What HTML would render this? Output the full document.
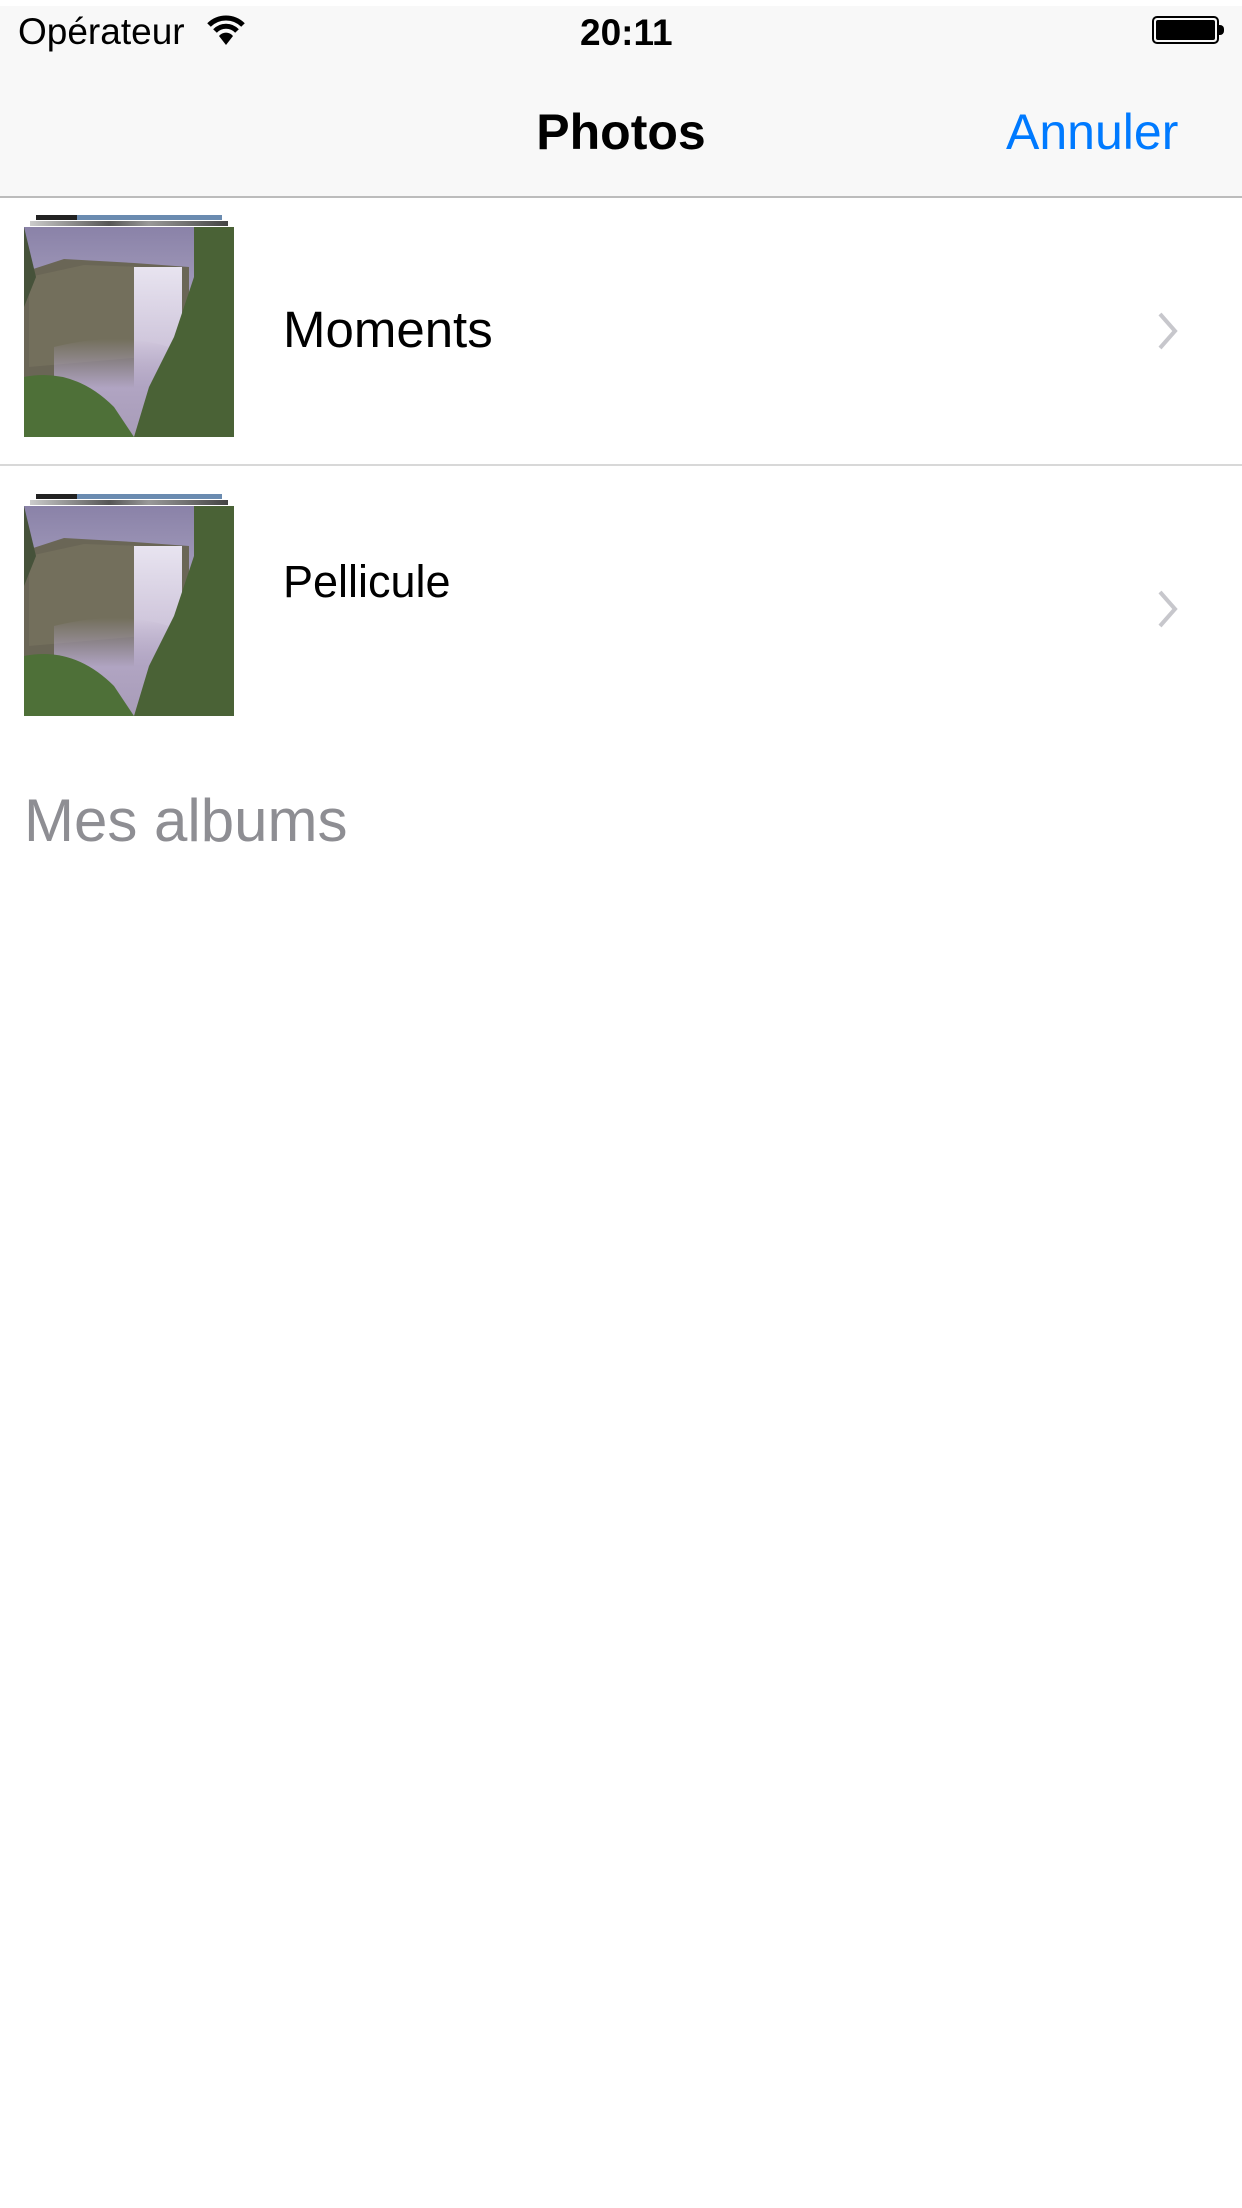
<!DOCTYPE html>
<html><head><meta charset="utf-8"><style>
*{margin:0;padding:0;box-sizing:border-box}
body{width:1242px;height:2208px;background:#fff;font-family:"Liberation Sans",sans-serif;position:relative;overflow:hidden}
.nav{position:absolute;left:0;top:6px;width:1242px;height:192px;background:#f8f8f8;border-bottom:2px solid #bcbcbc}
.abs{position:absolute;white-space:nowrap;line-height:1}
.sep{position:absolute;left:0;width:1242px;height:2px;background:#d8d8d8}
.thumb{position:absolute;left:24px;width:210px;height:210px}
.s1{position:absolute;left:36px;width:186px;height:5px;background:linear-gradient(90deg,#222 0 22%,#6a8bb0 22%)}
.s2{position:absolute;left:30px;width:198px;height:5px;background:linear-gradient(90deg,#ccc,#555 40%,#999 60%,#444)}
.chev{position:absolute;left:1156px;width:24px;height:40px}
</style></head><body>
<div class="nav"></div>
<div class="abs" style="left:18px;top:13px;font-size:37px;color:#000">Opérateur</div>
<svg class="abs" style="left:206px;top:14px" width="40" height="32" viewBox="0 0 40 32"><path d="M3 11 A24 24 0 0 1 37 11" fill="none" stroke="#000" stroke-width="5"/><path d="M9 17 A15 15 0 0 1 31 17" fill="none" stroke="#000" stroke-width="5"/><path d="M13 22 L20 31 L27 22 A9 9 0 0 0 13 22Z" fill="#000"/></svg>
<div class="abs" style="left:580px;top:14px;font-size:37px;font-weight:bold;color:#000">20:11</div>
<div class="abs" style="left:1152px;top:16px;width:67px;height:28px;border:2px solid #000;border-radius:5px;padding:2px"><div style="width:100%;height:100%;background:#000;border-radius:2px"></div></div>
<div class="abs" style="left:1219px;top:25px;width:5px;height:10px;background:#000;border-radius:0 4px 4px 0"></div>
<div class="abs" style="left:0;width:1242px;text-align:center;top:107px;font-size:50px;font-weight:bold;color:#000">Photos</div>
<div class="abs" style="left:1006px;top:107px;font-size:50px;color:#007aff">Annuler</div>

<svg width="0" height="0" style="position:absolute"><defs>
<linearGradient id="sky" x1="0" y1="0" x2="0" y2="1"><stop offset="0" stop-color="#8a82a8"/><stop offset="1" stop-color="#d8d2e4"/></linearGradient>
<linearGradient id="fall" x1="0" y1="0" x2="0" y2="1"><stop offset="0" stop-color="#e8e4f0"/><stop offset="1" stop-color="#b8aac8"/></linearGradient>
<linearGradient id="mist" x1="0" y1="0" x2="0" y2="1"><stop offset="0" stop-color="#b0a4c2" stop-opacity="0"/><stop offset=".5" stop-color="#b0a4c2"/><stop offset="1" stop-color="#a89cb8"/></linearGradient>
</defs></svg>

<div class="s1" style="top:215px"></div><div class="s2" style="top:221px"></div>
<svg class="thumb" style="top:227px" viewBox="0 0 210 210"><rect width="210" height="210" fill="url(#sky)"/><path d="M0 45 L40 32 L110 36 L165 40 L165 170 L0 175Z" fill="#6a6656"/><path d="M5 50 L60 38 L120 40 L120 130 L5 140Z" fill="#7a7460" opacity=".6"/><rect x="110" y="40" width="48" height="150" fill="url(#fall)"/><path d="M30 120 Q110 100 170 130 L170 210 L30 210Z" fill="url(#mist)"/><path d="M170 0 L210 0 L210 210 L110 210 L125 160 L150 110 L170 50Z" fill="#4a6236"/><path d="M0 150 Q50 140 90 180 L110 210 L0 210Z" fill="#4e7038"/><path d="M0 0 L0 80 L12 50Z" fill="#46523a"/></svg>
<div class="abs" style="left:283px;top:304px;font-size:51px;color:#000">Moments</div>
<svg class="chev" style="top:311px" viewBox="0 0 24 40"><path d="M4 3 L19 20 L4 37" fill="none" stroke="#c7c7cc" stroke-width="4"/></svg>
<div class="sep" style="top:464px"></div>

<div class="s1" style="top:494px"></div><div class="s2" style="top:500px"></div>
<svg class="thumb" style="top:506px" viewBox="0 0 210 210"><rect width="210" height="210" fill="url(#sky)"/><path d="M0 45 L40 32 L110 36 L165 40 L165 170 L0 175Z" fill="#6a6656"/><path d="M5 50 L60 38 L120 40 L120 130 L5 140Z" fill="#7a7460" opacity=".6"/><rect x="110" y="40" width="48" height="150" fill="url(#fall)"/><path d="M30 120 Q110 100 170 130 L170 210 L30 210Z" fill="url(#mist)"/><path d="M170 0 L210 0 L210 210 L110 210 L125 160 L150 110 L170 50Z" fill="#4a6236"/><path d="M0 150 Q50 140 90 180 L110 210 L0 210Z" fill="#4e7038"/><path d="M0 0 L0 80 L12 50Z" fill="#46523a"/></svg>
<div class="abs" style="left:283px;top:559px;font-size:45px;color:#000">Pellicule</div>
<svg class="chev" style="top:589px" viewBox="0 0 24 40"><path d="M4 3 L19 20 L4 37" fill="none" stroke="#c7c7cc" stroke-width="4"/></svg>

<div class="abs" style="left:24px;top:791px;font-size:60px;color:#8e8e93">Mes albums</div>
</body></html>
